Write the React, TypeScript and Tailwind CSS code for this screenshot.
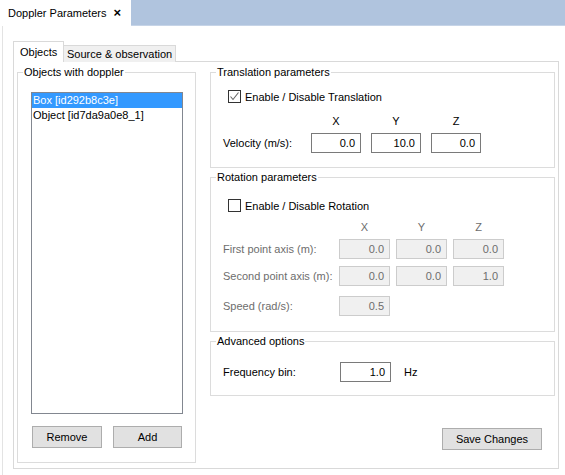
import React from "react";

const Legend = ({ children }: { children: React.ReactNode }) => (
  <legend className="ml-[5px] px-[1px] leading-[14px] text-black">{children}</legend>
);

const Check = ({ checked, label }: { checked: boolean; label: string }) => (
  <div className="flex items-center gap-[4px] h-[13px]">
    <div className="w-[13px] h-[13px] border border-[#333333] bg-white flex items-center justify-center">
      {checked && (
        <svg width="11" height="11" viewBox="0 0 11 11">
          <polyline points="1.5,5.5 4,8.5 9.5,1.5" fill="none" stroke="#666666" strokeWidth="1.1" />
        </svg>
      )}
    </div>
    <span className="leading-[14px]">{label}</span>
  </div>
);

const Field = ({ value, disabled, w }: { value: string; disabled?: boolean; w: string }) => (
  <div
    className={
      (disabled
        ? "bg-[#f0f0f0] border-[#cccccc] text-[#6d6d6d] "
        : "bg-white border-[#7a7a7a] text-black ") +
      w +
      " h-[20px] border flex items-center justify-end pr-[5px]"
    }
  >
    {value}
  </div>
);

export default function App() {
  return (
    <div className="w-[565px] h-[475px] bg-white overflow-hidden font-['Liberation_Sans',Arial,sans-serif] text-[11px] text-black">
      <div className="flex h-[26px]">
        <div className="w-[131px] h-full bg-white flex items-center pl-[8px] whitespace-nowrap">
          <span>Doppler Parameters</span>
          <span className="ml-[7px] font-bold text-[13px]">×</span>
        </div>
        <div className="flex-1 bg-[#b0c4de] border-b border-[#c6d4e7]" />
      </div>
      <div className="ml-[2px] border-l border-[#e3e3e3] h-[449px] pl-[10px] pt-[15px]">
        <div className="flex items-end h-[21px]">
          <div className="relative z-10 w-[51px] h-[21px] bg-white border-x border-t border-[#d9d9d9] flex items-center pl-[6px] whitespace-nowrap">
            Objects
          </div>
          <div className="w-[112px] h-[17px] bg-[#f0f0f0] border-r border-t border-[#d9d9d9] flex items-center pl-[3px] whitespace-nowrap">
            Source &amp; observation
          </div>
        </div>
        <div className="-mt-px w-[546px] h-[408px] border border-[#d9d9d9] flex gap-[14px] px-[3px] pt-[3px]">
          <fieldset className="w-[179px] h-[398px] border border-[#dcdcdc]">
            <Legend>Objects with doppler</Legend>
            <div className="pl-[13px] pt-[13px]">
              <div className="w-[152px] h-[322px] border border-[#828790] bg-white">
                <div className="h-[15px] bg-[#3399ff] text-white pl-[1px] leading-[15px]">Box [id292b8c3e]</div>
                <div className="h-[15px] pl-[1px] leading-[15px]">Object [id7da9a0e8_1]</div>
              </div>
              <div className="flex mt-[12px]">
                <button className="ml-[1px] w-[70px] h-[22px] bg-[#e1e1e1] border border-[#adadad] leading-[20px]">Remove</button>
                <button className="ml-[11px] w-[69px] h-[22px] bg-[#e1e1e1] border border-[#adadad] leading-[20px]">Add</button>
              </div>
            </div>
          </fieldset>
          <div className="w-[345px] flex flex-col">
            <fieldset className="h-[103px] border border-[#dcdcdc]">
              <Legend>Translation parameters</Legend>
              <div className="pl-[17px] mt-[11px]">
                <Check checked label="Enable / Disable Translation" />
              </div>
              <div className="flex pl-[12px] mt-[11px] h-[14px] leading-[14px]">
                <div className="w-[88px]" />
                <div className="flex gap-[10px]">
                  <div className="w-[50px] text-center">X</div>
                  <div className="w-[50px] text-center">Y</div>
                  <div className="w-[50px] text-center">Z</div>
                </div>
              </div>
              <div className="flex items-center pl-[12px] mt-[5px]">
                <div className="w-[88px]">Velocity (m/s):</div>
                <div className="flex gap-[10px]">
                  <Field value="0.0" w="w-[50px]" />
                  <Field value="10.0" w="w-[50px]" />
                  <Field value="0.0" w="w-[50px]" />
                </div>
              </div>
            </fieldset>
            <fieldset className="mt-[2px] h-[162px] border border-[#dcdcdc]">
              <Legend>Rotation parameters</Legend>
              <div className="pl-[17px] mt-[15px]">
                <Check checked={false} label="Enable / Disable Rotation" />
              </div>
              <div className="flex pl-[12px] mt-[8px] h-[14px] leading-[14px] text-[#6d6d6d]">
                <div className="w-[116px]" />
                <div className="flex gap-[6px]">
                  <div className="w-[51px] text-center">X</div>
                  <div className="w-[51px] text-center">Y</div>
                  <div className="w-[51px] text-center">Z</div>
                </div>
              </div>
              <div className="flex items-center pl-[12px] mt-[5px] text-[#6d6d6d]">
                <div className="w-[116px]">First point axis (m):</div>
                <div className="flex gap-[6px]">
                  <Field value="0.0" disabled w="w-[51px]" />
                  <Field value="0.0" disabled w="w-[51px]" />
                  <Field value="0.0" disabled w="w-[51px]" />
                </div>
              </div>
              <div className="flex items-center pl-[12px] mt-[7px] text-[#6d6d6d]">
                <div className="w-[116px]">Second point axis (m):</div>
                <div className="flex gap-[6px]">
                  <Field value="0.0" disabled w="w-[51px]" />
                  <Field value="0.0" disabled w="w-[51px]" />
                  <Field value="1.0" disabled w="w-[51px]" />
                </div>
              </div>
              <div className="flex items-center pl-[12px] mt-[10px] text-[#6d6d6d]">
                <div className="w-[116px]">Speed (rad/s):</div>
                <Field value="0.5" disabled w="w-[51px]" />
              </div>
            </fieldset>
            <fieldset className="mt-[2px] h-[62px] border border-[#dcdcdc]">
              <Legend>Advanced options</Legend>
              <div className="flex items-center pl-[12px] mt-[14px]">
                <div className="w-[117px]">Frequency bin:</div>
                <Field value="1.0" w="w-[51px]" />
                <div className="ml-[13px]">Hz</div>
              </div>
            </fieldset>
            <div className="flex justify-end pr-[13px] mt-[32px]">
              <button className="w-[100px] h-[22px] bg-[#e1e1e1] border border-[#adadad] leading-[20px]">Save Changes</button>
            </div>
          </div>
        </div>
      </div>
    </div>
  );
}
